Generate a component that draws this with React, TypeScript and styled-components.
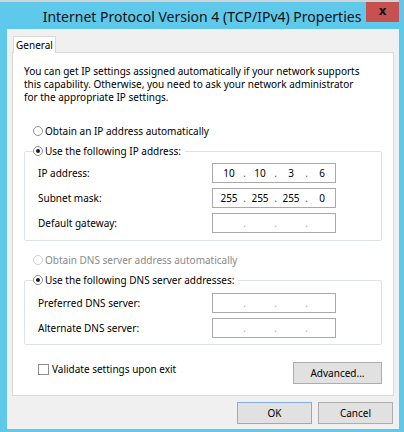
import React from 'react';
import styled, { createGlobalStyle } from 'styled-components';

const Global = createGlobalStyle`
  html, body { margin: 0; padding: 0; }
  body {
    font-family: "Noto Sans", "Open Sans", sans-serif;
    font-size: 10px;
    color: #000;
  }
  * { box-sizing: border-box; }
`;

const Window = styled.div`
  width: 404px;
  height: 432px;
  background: #5ec9ea;
  display: flex;
  flex-direction: column;
`;

const BehindStrip = styled.div`
  height: 2px;
  margin-right: 5px;
  background: #cfd3d6;
`;

const TitleBar = styled.div`
  height: 27px;
  display: grid;
  grid-template-columns: 1fr auto 1fr;
  align-items: start;
`;

const Title = styled.div`
  grid-column: 2;
  font-size: 14px;
  line-height: 27px;
  padding-top: 1px;
  white-space: nowrap;
  color: #111;
`;

const CloseButton = styled.div`
  grid-column: 3;
  justify-self: end;
  width: 33px;
  height: 20px;
  margin-right: 5px;
  background: #c75050;
  display: flex;
  align-items: center;
  justify-content: center;
  font-family: "DejaVu Sans", sans-serif;
  font-weight: bold;
  font-size: 12px;
  color: #141414;
  padding-bottom: 2px;
`;

const Client = styled.div`
  flex: 1;
  margin: 0 5px 3px 7px;
  background: #f0f0f0;
  padding: 7px 5px 0;
  display: flex;
  flex-direction: column;
`;

const TabStrip = styled.div`
  height: 16px;
  display: flex;
  padding-left: 1px;
`;

const Tab = styled.div`
  position: relative;
  z-index: 1;
  height: 17px;
  width: 43px;
  background: #fff;
  border: 1px solid #d9d9d9;
  border-bottom: none;
  display: flex;
  align-items: center;
  justify-content: center;
  padding-bottom: 1px;
`;

const Panel = styled.div`
  height: 344px;
  background: #fff;
  border: 1px solid #d9d9d9;
  display: flex;
  flex-direction: column;
  padding: 0 11px 0 0;
`;

const Intro = styled.p`
  margin: 12px 0 0 11px;
  line-height: 13px;
  white-space: nowrap;
`;

const RadioRow = styled.div<{ $disabled?: boolean; $top: number }>`
  display: flex;
  align-items: center;
  gap: 2px;
  height: 16px;
  margin: ${p => p.$top}px 0 0 20px;
  color: ${p => (p.$disabled ? '#8a8a8a' : '#000')};
`;

const RadioCircle = styled.span<{ $checked?: boolean; $disabled?: boolean }>`
  width: 10px;
  height: 10px;
  border-radius: 50%;
  border: 1px solid ${p => (p.$disabled ? '#cdcdcd' : '#8e8e8e')};
  background: #fff;
  display: inline-flex;
  align-items: center;
  justify-content: center;
  flex: none;
  &::after {
    content: '';
    width: 4px;
    height: 4px;
    border-radius: 50%;
    background: #1a1a1a;
    display: ${p => (p.$checked ? 'block' : 'none')};
  }
`;

const GroupBox = styled.div<{ $top: number; $bottom: number; $gap: number }>`
  margin: ${p => p.$top}px 0 0 11px;
  border: 1px solid #dde3e6;
  border-radius: 2px;
  padding: 0 0 ${p => p.$bottom}px 13px;
  display: flex;
  flex-direction: column;
  gap: 5px;
  & > div:nth-child(2) {
    margin-top: ${p => p.$gap}px;
  }
`;

const Legend = styled.div`
  margin: -9px 0 0 -5px;
  height: 16px;
  width: fit-content;
  background: #fff;
  padding-right: 4px;
  display: flex;
  align-items: center;
  gap: 2px;
`;

const FieldRow = styled.div`
  display: grid;
  grid-template-columns: 174px 124px;
  align-items: center;
  height: 20px;
`;

const IpBox = styled.div`
  height: 20px;
  border: 1px solid #a9a9a9;
  background: #fff;
  display: grid;
  grid-template-columns: 28px 3px 28px 3px 28px 3px 28px;
  padding-left: 2px;
  align-items: center;
  text-align: center;
`;

const Dot = styled.span<{ $empty?: boolean }>`
  color: ${p => (p.$empty ? '#b9a48c' : '#555')};
  display: flex;
  justify-content: center;
`;

const BottomRow = styled.div`
  margin: 17px 0 0 25px;
  display: flex;
  justify-content: space-between;
  align-items: flex-start;
`;

const CheckLabel = styled.div`
  display: flex;
  align-items: center;
  gap: 3px;
  height: 12px;
  margin-top: 1px;
`;

const CheckBox = styled.span`
  width: 11px;
  height: 11px;
  border: 1px solid #8e8e8e;
  background: #fff;
  flex: none;
`;

const Button = styled.div<{ $default?: boolean; $w: number; $h: number }>`
  width: ${p => p.$w}px;
  height: ${p => p.$h}px;
  background: #e1e1e1;
  border: 1px solid ${p => (p.$default ? '#7fb0df' : '#adadad')};
  display: flex;
  align-items: center;
  justify-content: center;
`;

const ButtonRow = styled.div`
  margin-top: 6px;
  display: flex;
  justify-content: flex-end;
  gap: 6px;
  padding-right: 1px;
`;

const IpField = ({ parts }: { parts?: string[] }) => {
  const p = parts ?? ['', '', '', ''];
  const empty = !parts;
  return (
    <IpBox>
      <span>{p[0]}</span>
      <Dot $empty={empty}>.</Dot>
      <span>{p[1]}</span>
      <Dot $empty={empty}>.</Dot>
      <span>{p[2]}</span>
      <Dot $empty={empty}>.</Dot>
      <span>{p[3]}</span>
    </IpBox>
  );
};

export default function App() {
  return (
    <>
      <Global />
      <Window>
        <BehindStrip />
        <TitleBar>
          <Title>Internet Protocol Version 4 (TCP/IPv4) Properties</Title>
          <CloseButton>x</CloseButton>
        </TitleBar>
        <Client>
          <TabStrip>
            <Tab>General</Tab>
          </TabStrip>
          <Panel>
            <Intro>
              You can get IP settings assigned automatically if your network supports
              <br />
              this capability. Otherwise, you need to ask your network administrator
              <br />
              for the appropriate IP settings.
            </Intro>
            <RadioRow $top={19}>
              <RadioCircle />
              Obtain an IP address automatically
            </RadioRow>
            <GroupBox $top={12} $bottom={7} $gap={-1}>
              <Legend>
                <RadioCircle $checked />
                Use the following IP address:
              </Legend>
              <FieldRow>
                <span>IP address:</span>
                <IpField parts={['10', '10', '3', '6']} />
              </FieldRow>
              <FieldRow>
                <span>Subnet mask:</span>
                <IpField parts={['255', '255', '255', '0']} />
              </FieldRow>
              <FieldRow>
                <span>Default gateway:</span>
                <IpField />
              </FieldRow>
            </GroupBox>
            <RadioRow $top={11} $disabled>
              <RadioCircle $disabled />
              Obtain DNS server address automatically
            </RadioRow>
            <GroupBox $top={12} $bottom={6} $gap={0}>
              <Legend>
                <RadioCircle $checked />
                Use the following DNS server addresses:
              </Legend>
              <FieldRow>
                <span>Preferred DNS server:</span>
                <IpField />
              </FieldRow>
              <FieldRow>
                <span>Alternate DNS server:</span>
                <IpField />
              </FieldRow>
            </GroupBox>
            <BottomRow>
              <CheckLabel>
                <CheckBox />
                Validate settings upon exit
              </CheckLabel>
              <Button $w={89} $h={22}>Advanced...</Button>
            </BottomRow>
          </Panel>
          <ButtonRow>
            <Button $default $w={75} $h={22}>OK</Button>
            <Button $w={75} $h={22}>Cancel</Button>
          </ButtonRow>
        </Client>
      </Window>
    </>
  );
}
